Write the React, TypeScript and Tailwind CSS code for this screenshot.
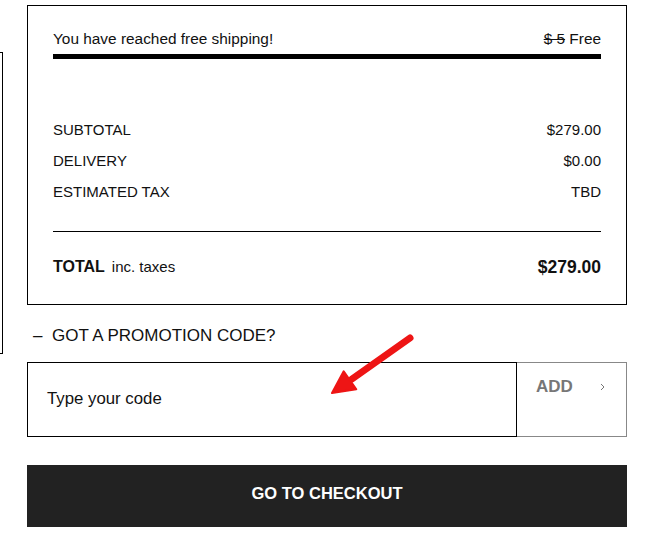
import React from 'react';

const rows = [
  { label: 'SUBTOTAL', value: '$279.00' },
  { label: 'DELIVERY', value: '$0.00' },
  { label: 'ESTIMATED TAX', value: 'TBD' },
];

const CartSummary = () => {
  return (
    <div
      className="relative w-[659px] h-[542px] overflow-hidden bg-white text-[#111]"
      style={{ fontFamily: '"Liberation Sans", Arial, sans-serif' }}
    >
      <div className="flex">
        {/* edge of the neighbouring panel */}
        <div className="mt-[52px] h-[302px] w-[3px] shrink-0 border-y border-r border-black" />

        <div className="ml-[24px] w-[600px] shrink-0">
          {/* Summary box */}
          <div className="mt-[5px] h-[300px] border border-black px-[25px] pt-[23px]">
            <div className="flex justify-between text-[15.4px] leading-[20px]">
              <span>You have reached free shipping!</span>
              <span>
                <span className="line-through">$ 5</span> Free
              </span>
            </div>
            <div className="mt-[5px] h-[5px] bg-black" />

            <div className="mt-[61px] flex flex-col gap-[11px]">
              {rows.map(row => (
                <div key={row.label} className="flex justify-between text-[15px] leading-[20px]">
                  <span>{row.label}</span>
                  <span>{row.value}</span>
                </div>
              ))}
            </div>

            <div className="mt-[29px] h-px bg-black" />

            <div className="mt-[25px] flex items-center justify-between leading-[20px]">
              <span className="text-[15px]">
                <span className="font-bold text-[16px]">TOTAL</span>
                <span className="ml-[7px]">inc. taxes</span>
              </span>
              <span className="font-bold text-[17.5px]">$279.00</span>
            </div>
          </div>

          {/* Promotion code */}
          <div className="mt-[21px] flex items-center text-[17px] leading-[20px]">
            <span className="ml-[6px] w-[19px]">–</span>
            <span>GOT A PROMOTION CODE?</span>
          </div>

          <div className="mt-[16px] flex h-[75px]">
            <div className="flex w-[490px] items-center border border-black pb-[2px] pl-[19px] text-[16.8px]">
              Type your code
            </div>
            <button className="flex w-[110px] items-start justify-between border-y border-r border-[#888] pl-[19px] pr-[21px] pt-[14px]">
              <span className="font-bold text-[17px] leading-[20px] text-[#777]">ADD</span>
              <svg width="5" height="8" viewBox="0 0 5 8" className="mt-[6px]">
                <path d="M1 1l3 3-3 3" fill="none" stroke="#777" strokeWidth="1" />
              </svg>
            </button>
          </div>

          <button className="mt-[28px] flex h-[62px] w-[600px] items-center justify-center bg-[#222] pb-[5px] font-bold text-[16.5px] text-white">
            GO TO CHECKOUT
          </button>
        </div>
      </div>

      {/* annotation arrow */}
      <svg className="pointer-events-none absolute left-0 top-0" width="659" height="542">
        <line x1="410" y1="338" x2="352" y2="379" stroke="#ee1515" strokeWidth="7" strokeLinecap="round" />
        <polygon points="332,393 343.7,371.3 356.3,389.3" fill="#ee1515" stroke="#ee1515" strokeWidth="2" strokeLinejoin="round" />
      </svg>
    </div>
  );
};

export default function App() {
  return <CartSummary />;
}
